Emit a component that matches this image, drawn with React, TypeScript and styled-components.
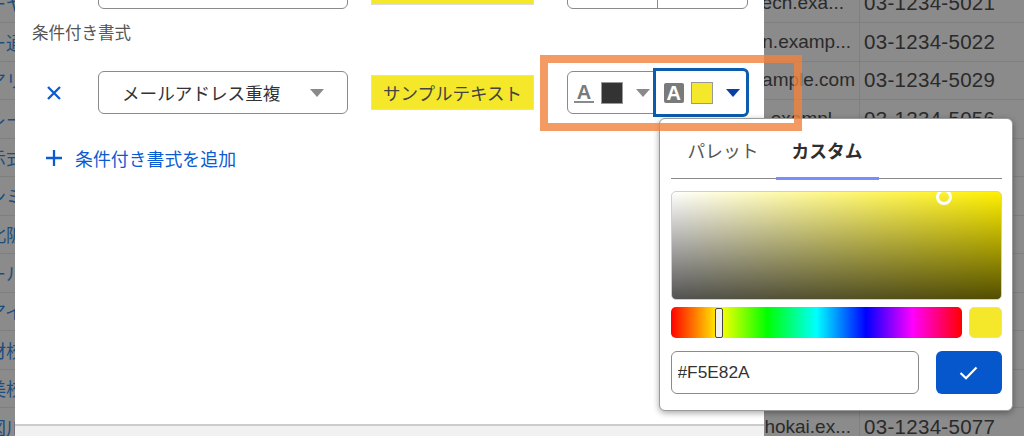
import React from 'react'
import styled, { createGlobalStyle } from 'styled-components'

const FONT = '"Liberation Sans", "Noto Sans CJK JP", sans-serif'

const rows = [
  { name: 'ーヤ', email: 'tech.exa...', inset: 15, phone: '03-1234-5021' },
  { name: 'ー通', email: 'n.examp...', inset: 8, phone: '03-1234-5022' },
  { name: 'アリ', email: 'example.com', inset: 4, phone: '03-1234-5029' },
  { name: 'レー', email: '.exampl', inset: 27, phone: '03-1234-5056' },
  { name: '示式', email: 'sample.com', inset: 5, phone: '03-1234-5058' },
  { name: 'ンミ', email: 'sample.com', inset: 5, phone: '03-1234-5060' },
  { name: '北阪', email: 'sample.com', inset: 5, phone: '03-1234-5063' },
  { name: 'ール', email: 'sample.com', inset: 5, phone: '03-1234-5066' },
  { name: 'アイ', email: 'sample.com', inset: 5, phone: '03-1234-5069' },
  { name: '材校', email: 'sample.com', inset: 5, phone: '03-1234-5071' },
  { name: '美校', email: 'sample.com', inset: 5, phone: '03-1234-5074' },
  { name: '図川', email: 'hokai.ex...', inset: 8, phone: '03-1234-5077' },
]

const App = () => {
  return (
    <Page>
      <GlobalStyle />
      <Backdrop>
        {rows.map((row) => (
          <TableRow key={row.phone}>
            <NameCell><span>{row.name}</span></NameCell>
            <EmailCell $inset={row.inset}>{row.email}</EmailCell>
            <PhoneCell>{row.phone}</PhoneCell>
          </TableRow>
        ))}
      </Backdrop>

      <Modal>
        <ModalBody>
          <ConditionRow>
            <span />
            <SelectBox />
            <SampleBox />
            <ColorGroup>
              <ColorButton />
              <ColorButton $divided />
            </ColorGroup>
          </ConditionRow>

          <SectionTitle>条件付き書式</SectionTitle>

          <ConditionRow>
            <RemoveIcon viewBox="0 0 14 14">
              <path d="M1 1 L13 13 M13 1 L1 13" />
            </RemoveIcon>
            <SelectBox>
              <span>メールアドレス重複</span>
              <Caret $color="#8a8a8a" />
            </SelectBox>
            <SampleBox>サンプルテキスト</SampleBox>
            <ColorGroup>
              <ColorButton>
                <TextColorIcon>A</TextColorIcon>
                <Swatch $color="#333333" />
                <Caret $color="#8a8a8a" />
              </ColorButton>
              <ColorButton $active>
                <BackColorIcon>A</BackColorIcon>
                <Swatch $color="#f5e82a" />
                <Caret $color="#0b3fa8" />
              </ColorButton>
            </ColorGroup>
          </ConditionRow>

          <AddRow>
            <PlusIcon viewBox="0 0 16 16">
              <path d="M8 0 V16 M0 8 H16" />
            </PlusIcon>
            <span>条件付き書式を追加</span>
          </AddRow>
        </ModalBody>
        <ModalFooter />
      </Modal>

      <Popover>
        <Tabs>
          <Tab>パレット</Tab>
          <Tab $active>カスタム</Tab>
        </Tabs>
        <Picker>
          <PickerMarker />
        </Picker>
        <HueRow>
          <HueBar>
            <HueHandle />
          </HueBar>
          <HueSwatch />
        </HueRow>
        <FormRow>
          <HexInput defaultValue="#F5E82A" />
          <ConfirmButton>
            <svg width="19" height="14" viewBox="0 0 19 14" fill="none" stroke="#fff" strokeWidth="2.2">
              <path d="M1.5 7 L7 12.3 L17.5 1.5" />
            </svg>
          </ConfirmButton>
        </FormRow>
      </Popover>

      <Highlight />
    </Page>
  )
}

export default App

const GlobalStyle = createGlobalStyle`
  html, body {
    margin: 0;
    padding: 0;
    overflow: hidden;
  }
  * {
    box-sizing: border-box;
  }
`
const Page = styled.div`
  position: relative;
  width: 1024px;
  height: 436px;
  overflow: hidden;
  background: #8b8b8b;
  font-family: ${FONT};
`
const Backdrop = styled.div`
  display: flex;
  flex-direction: column;
  margin-top: -15.5px;
`
const TableRow = styled.div`
  display: grid;
  grid-template-columns: 15px 844px 165px;
  height: 38.5px;
  border-bottom: 1px solid #7f7f7f;
  align-items: center;
`
const NameCell = styled.div`
  overflow: hidden;
  white-space: nowrap;
  font-size: 18px;
  color: #1c4d7d;
  span {
    display: block;
    margin-left: -12px;
  }
`
const EmailCell = styled.div<{ $inset: number }>`
  text-align: right;
  padding-right: ${(p) => p.$inset}px;
  font-size: 19px;
  color: #2a2a2a;
  white-space: nowrap;
`
const PhoneCell = styled.div`
  height: 100%;
  display: flex;
  align-items: center;
  padding-left: 4px;
  border-left: 1px solid #7f7f7f;
  font-size: 20.5px;
  letter-spacing: 0.3px;
  color: #2a2a2a;
  white-space: nowrap;
`
const Modal = styled.div`
  position: absolute;
  left: 15px;
  top: 0;
  width: 749px;
  height: 436px;
  display: flex;
  flex-direction: column;
  background: #fff;
  overflow: hidden;
`
const ModalBody = styled.div`
  flex: 1;
  margin-top: -34px;
  padding-left: 17px;
`
const ModalFooter = styled.div`
  height: 12px;
  background: #f1f1f1;
  border-top: 2px solid #cccccc;
`
const SectionTitle = styled.div`
  margin: 14px 0 28px;
  font-size: 16.5px;
  line-height: 20px;
  color: #555;
`
const ConditionRow = styled.div`
  display: grid;
  grid-template-columns: 66px 250px 186px 214px;
  align-items: center;
  height: 43px;
`
const RemoveIcon = styled.svg`
  width: 14px;
  height: 14px;
  margin-left: 15px;
  fill: none;
  stroke: #0b5bd3;
  stroke-width: 2.3;
`
const SelectBox = styled.div`
  height: 43px;
  display: flex;
  align-items: center;
  justify-content: space-between;
  padding: 0 23px 0 23px;
  border: 1.5px solid #8a8a8a;
  border-radius: 6px;
  font-size: 17.6px;
  color: #333;
`
const SampleBox = styled.div`
  width: 163px;
  height: 35px;
  margin-left: 23px;
  display: flex;
  align-items: center;
  justify-content: center;
  background: #f5e82a;
  border: 1.5px solid #dddddd;
  font-size: 17.5px;
  color: #444;
  white-space: nowrap;
`
const ColorGroup = styled.div`
  width: 181px;
  height: 43px;
  margin-left: 33px;
  display: flex;
  border: 1.5px solid #8a8a8a;
  border-radius: 6px;
`
const ColorButton = styled.div<{ $active?: boolean; $divided?: boolean }>`
  flex: 1;
  display: flex;
  align-items: center;
  gap: 7px;
  padding-left: ${(p) => (p.$active ? '8px' : '6px')};
  border-radius: 0 6px 6px 0;
  ${(p) => p.$divided && 'border-left: 1.5px solid #8a8a8a;'}
  ${(p) =>
    p.$active &&
    `
    margin: -4px -1.5px -4px -3px;
    background: #fff;
    border: 3px solid #0b5cad;
    border-radius: 0 6px 6px 0;
  `}
`
const TextColorIcon = styled.span`
  width: 20px;
  height: 20px;
  display: flex;
  align-items: center;
  justify-content: center;
  border-bottom: 2px solid #8a8a8a;
  font-size: 20px;
  line-height: 18px;
  font-weight: 700;
  color: #7a7a7a;
`
const BackColorIcon = styled.span`
  width: 20px;
  height: 20px;
  display: flex;
  align-items: center;
  justify-content: center;
  background: #7a7a7a;
  border-radius: 2px;
  font-size: 20px;
  line-height: 20px;
  font-weight: 700;
  color: #fff;
`
const Swatch = styled.span<{ $color: string }>`
  width: 22px;
  height: 22px;
  background: ${(p) => p.$color};
  border: 1.5px solid #999;
`
const Caret = styled.span<{ $color: string }>`
  width: 0;
  height: 0;
  margin-left: 6px;
  border-left: 7px solid transparent;
  border-right: 7px solid transparent;
  border-top: 8px solid ${(p) => p.$color};
`
const AddRow = styled.div`
  display: flex;
  align-items: center;
  gap: 13px;
  height: 24px;
  margin-top: 32px;
  padding-left: 14px;
  font-size: 17.9px;
  color: #0b5bd3;
`
const PlusIcon = styled.svg`
  width: 16px;
  height: 16px;
  fill: none;
  stroke: #0b5bd3;
  stroke-width: 2.3;
`
const Popover = styled.div`
  position: absolute;
  left: 659px;
  top: 118px;
  width: 354px;
  height: 293px;
  padding: 0 10.5px;
  background: #fff;
  border: 1px solid #9a9a9a;
  border-radius: 6px;
  box-shadow: 0 2px 6px rgba(0, 0, 0, 0.35);
`
const Tabs = styled.div`
  display: flex;
  height: 60px;
  border-bottom: 1.5px solid #8a8a8a;
`
const Tab = styled.div<{ $active?: boolean }>`
  width: ${(p) => (p.$active ? '103px' : '105px')};
  height: 61px;
  padding-top: 4px;
  display: flex;
  align-items: center;
  justify-content: center;
  font-size: 17.7px;
  font-weight: ${(p) => (p.$active ? 700 : 400)};
  color: ${(p) => (p.$active ? '#2e2e2e' : '#555')};
  border-bottom: 3px solid ${(p) => (p.$active ? '#7b8cff' : 'transparent')};
`
const Picker = styled.div`
  position: relative;
  height: 109px;
  margin-top: 12px;
  overflow: hidden;
  border: 1px solid #cfcfcf;
  border-radius: 5px;
  background:
    linear-gradient(to top, rgba(0, 0, 0, 0.68), rgba(0, 0, 0, 0)),
    linear-gradient(to right, #ffffff, #fff000);
`
const PickerMarker = styled.div`
  position: absolute;
  left: 264px;
  top: -3px;
  width: 16px;
  height: 16px;
  border: 3px solid #fff;
  border-radius: 50%;
`
const HueRow = styled.div`
  display: flex;
  gap: 7px;
  height: 31px;
  margin-top: 7px;
`
const HueBar = styled.div`
  position: relative;
  width: 291px;
  border-radius: 5px;
  background: linear-gradient(
    to right,
    #ff0000 0%,
    #ffff00 17%,
    #00ff00 33%,
    #00ffff 50%,
    #0000ff 67%,
    #ff00ff 83%,
    #ff0000 100%
  );
`
const HueHandle = styled.div`
  position: absolute;
  left: 44px;
  top: 1px;
  width: 8px;
  height: 30px;
  background: #f2f2f2;
  border: 1px solid #444;
  border-radius: 2px;
`
const HueSwatch = styled.div`
  width: 33px;
  background: #f5e82a;
  border: 1px solid #dcdcdc;
  border-radius: 5px;
`
const FormRow = styled.div`
  display: flex;
  justify-content: space-between;
  height: 43px;
  margin-top: 13px;
`
const HexInput = styled.input`
  width: 248px;
  height: 43px;
  padding: 0 6px;
  border: 1.5px solid #8a8a8a;
  border-radius: 6px;
  outline: none;
  font-family: ${FONT};
  font-size: 17.3px;
  color: #333;
`
const ConfirmButton = styled.button`
  width: 66px;
  height: 43px;
  padding: 0;
  display: flex;
  align-items: center;
  justify-content: center;
  background: #0757cc;
  border: none;
  border-radius: 6px;
`
const Highlight = styled.div`
  position: absolute;
  left: 540px;
  top: 55px;
  width: 262px;
  height: 76px;
  border: 8px solid rgba(240, 130, 60, 0.8);
  pointer-events: none;
`
